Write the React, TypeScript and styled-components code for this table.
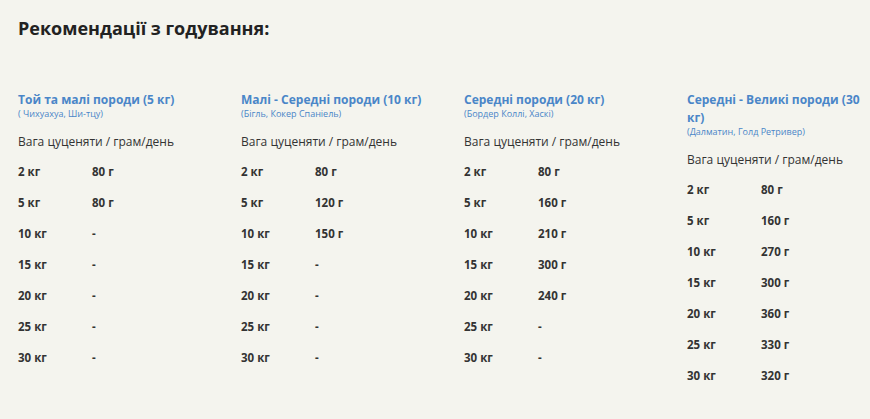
import * as React from 'react';
import styled, { createGlobalStyle } from 'styled-components';

const GlobalStyle = createGlobalStyle`
  html, body {
    margin: 0;
    padding: 0;
    background: #f4f4ee;
    font-family: 'Open Sans', 'Noto Sans', sans-serif;
    color: #333;
  }
`;

const Page = styled.div`
  padding: 17px 18px 0;
  overflow: hidden;
`;

const Title = styled.h2`
  margin: 0;
  font-size: 18px;
  line-height: 22px;
  font-weight: 700;
  color: #222;
`;

const Columns = styled.div`
  display: flex;
  margin-top: 52px;
  width: 892px;
`;

const Column = styled.div`
  flex: 0 0 223px;
  padding-right: 38px;
  box-sizing: border-box;
`;

const Heading = styled.div`
  font-size: 12px;
  line-height: 18px;
  font-weight: 700;
  color: #4a86c8;
`;

const Breeds = styled.div`
  font-size: 9px;
  line-height: 10px;
  color: #4a86c8;
`;

const Caption = styled.div`
  margin-top: 14px;
  margin-bottom: 12px;
  font-size: 12px;
  line-height: 18px;
  color: #333;
`;

const Row = styled.div`
  display: flex;
  font-size: 11.5px;
  line-height: 18px;
  font-weight: 700;
  color: #333;
  margin-bottom: 13px;
`;

const Weight = styled.span`
  width: 74px;
`;

type Group = { title: string; breeds: string; values: string[] };

const weights = ['2 кг', '5 кг', '10 кг', '15 кг', '20 кг', '25 кг', '30 кг'];

const groups: Group[] = [
  {
    title: 'Той та малі породи (5 кг)',
    breeds: '( Чихуахуа, Ши-тцу)',
    values: ['80 г', '80 г', '-', '-', '-', '-', '-'],
  },
  {
    title: 'Малі - Середні породи (10 кг)',
    breeds: '(Бігль, Кокер Спаніель)',
    values: ['80 г', '120 г', '150 г', '-', '-', '-', '-'],
  },
  {
    title: 'Середні породи (20 кг)',
    breeds: '(Бордер Коллі, Хаскі)',
    values: ['80 г', '160 г', '210 г', '300 г', '240 г', '-', '-'],
  },
  {
    title: 'Середні - Великі породи (30 кг)',
    breeds: '(Далматин, Голд Ретривер)',
    values: ['80 г', '160 г', '270 г', '300 г', '360 г', '330 г', '320 г'],
  },
];

export default function App(): JSX.Element {
  return (
    <>
      <GlobalStyle />
      <Page>
        <Title>Рекомендації з годування:</Title>
        <Columns>
          {groups.map((g) => (
            <Column key={g.title}>
              <Heading>{g.title}</Heading>
              <Breeds>{g.breeds}</Breeds>
              <Caption>Вага цуценяти / грам/день</Caption>
              {weights.map((w, i) => (
                <Row key={w}>
                  <Weight>{w}</Weight>
                  <span>{g.values[i]}</span>
                </Row>
              ))}
            </Column>
          ))}
        </Columns>
      </Page>
    </>
  );
}
